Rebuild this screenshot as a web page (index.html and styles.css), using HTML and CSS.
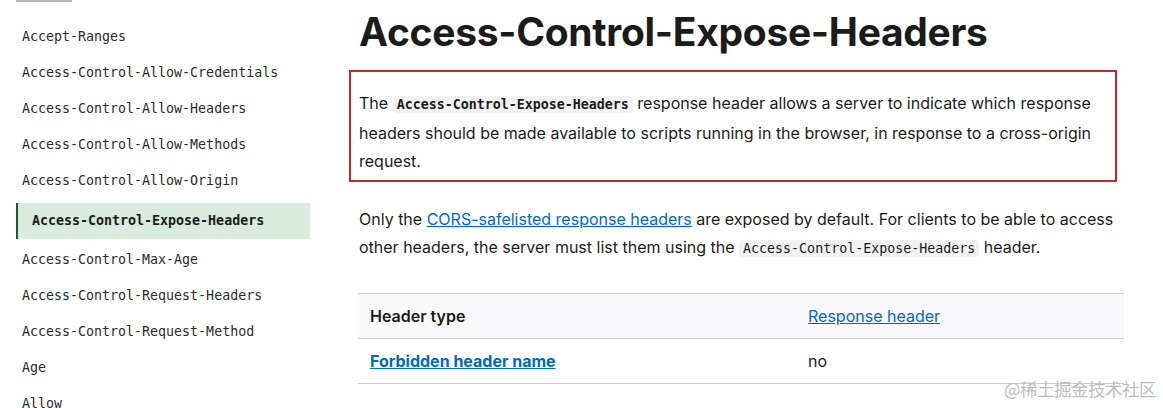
FILE: index.html
```html
<!DOCTYPE html>
<html lang="en">
<head>
    <meta charset="UTF-8">
    <title>Access-Control-Expose-Headers</title>
    <link rel="stylesheet" href="styles.css">
</head>
<body>
    <div class="page">
        <nav class="sidebar">
            <div class="sidebar-top"></div>
            <ul class="nav-list">
                <li>Accept-Ranges</li>
                <li>Access-Control-Allow-Credentials</li>
                <li>Access-Control-Allow-Headers</li>
                <li>Access-Control-Allow-Methods</li>
                <li>Access-Control-Allow-Origin</li>
                <li class="active">Access-Control-Expose-Headers</li>
                <li>Access-Control-Max-Age</li>
                <li>Access-Control-Request-Headers</li>
                <li>Access-Control-Request-Method</li>
                <li>Age</li>
                <li>Allow</li>
            </ul>
        </nav>

        <main class="content">
            <h1>Access-Control-Expose-Headers</h1>

            <div class="highlight">
                <p>The <code class="strong">Access-Control-Expose-Headers</code> response header allows a server to indicate which response headers should be made available to scripts running in the browser, in response to a cross-origin request.</p>
            </div>

            <p class="second">Only the <a href="#">CORS-safelisted response headers</a> are exposed by default. For clients to be able to access other headers, the server must list them using the <code>Access-Control-Expose-Headers</code> header.</p>

            <table class="props">
                <tbody>
                    <tr class="head-row">
                        <th>Header type</th>
                        <td><a href="#">Response header</a></td>
                    </tr>
                    <tr>
                        <th><a href="#">Forbidden header name</a></th>
                        <td>no</td>
                    </tr>
                </tbody>
            </table>
        </main>
    </div>

    <div class="watermark">@稀土掘金技术社区</div>
</body>
</html>
```

FILE: styles.css
```css
body {
    margin: 0;
    background: #fff;
    color: #1b1b1b;
    font-family: Inter, "Noto Sans", sans-serif;
    font-size: 16px;
}
.page {
    display: flex;
    padding-left: 16px;
}
.sidebar {
    width: 294px;
    flex-shrink: 0;
}
.sidebar-top {
    width: 56px;
    height: 2px;
    background: #b8b8b8;
}
.nav-list {
    list-style: none;
    margin: 17px 0 0;
    padding: 0;
    font-family: "DejaVu Sans Mono", monospace;
    font-size: 13.3px;
    color: #2b2b2b;
}
.nav-list li {
    height: 36px;
    line-height: 36px;
    padding-left: 6px;
    white-space: nowrap;
}
.nav-list li.active {
    margin: 4px 0 3px;
    padding-left: 14px;
    border-left: 2px solid #1d5a2c;
    background: #d8ebdd;
    font-weight: bold;
    color: #1b1b1b;
}
.content {
    margin-left: 49px;
    width: 766px;
}
h1 {
    margin: 8px 0 14px;
    font-size: 39px;
    line-height: 48px;
    font-weight: 700;
    letter-spacing: -0.3px;
}
.highlight {
    margin-left: -10px;
    border: 2px solid #d3212b;
    padding: 17px 8px 5px;
    width: 748px;
}
p {
    margin: 0;
    line-height: 28px;
}
code {
    font-family: "DejaVu Sans Mono", monospace;
    font-size: 13.3px;
    background: #f2f1f1;
    padding: 1px 4px;
    border-radius: 4px;
}
code.strong {
    font-weight: bold;
}
.second {
    margin-top: 23px;
}
a {
    color: #0069c2;
}
.props {
    margin-top: 30px;
    margin-left: -1px;
    width: 766px;
    border-collapse: collapse;
    table-layout: fixed;
}
.props th, .props td {
    height: 44px;
    padding: 0 12px;
    text-align: left;
    border-top: 1px solid #cdcdcd;
    border-bottom: 1px solid #cdcdcd;
}
.props th {
    width: 414px;
    font-weight: 600;
}
.props th a {
    font-weight: 700;
}
.head-row {
    background: #f9f9fb;
}
.watermark {
    position: absolute;
    right: 7px;
    top: 376px;
    font-family: "Noto Sans CJK SC", sans-serif;
    font-size: 17.5px;
    color: #bdbdbd;
    letter-spacing: -0.5px;
}
```
